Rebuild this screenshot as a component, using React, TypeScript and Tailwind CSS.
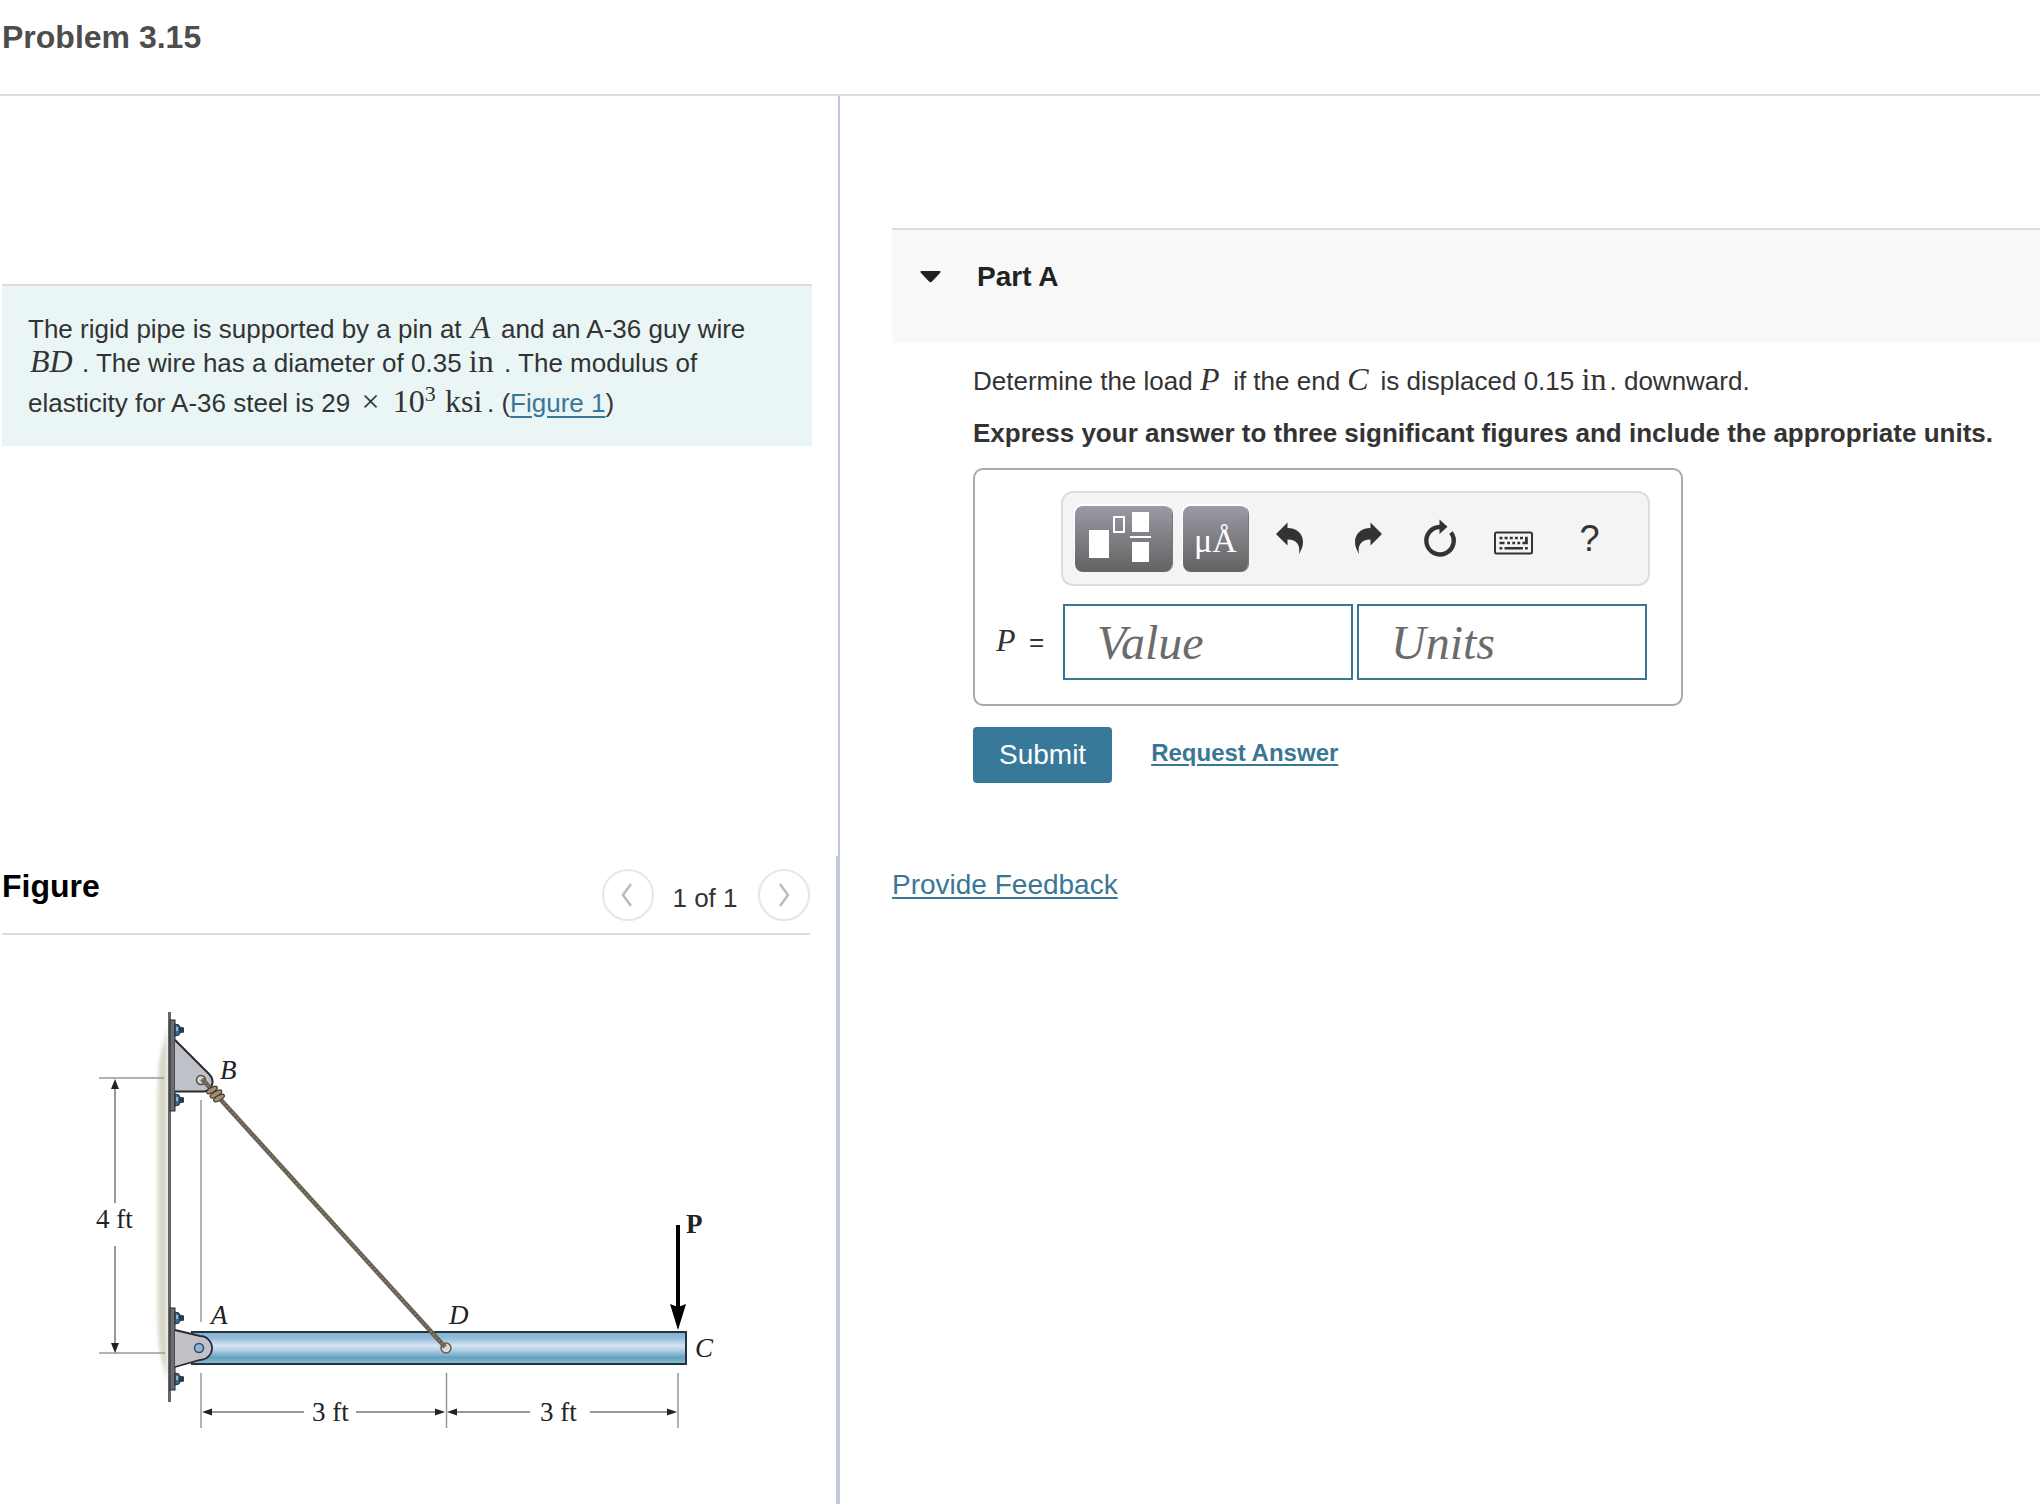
import type { ReactNode } from "react";

function MathText({ children, className = "" }: { children: ReactNode; className?: string }) {
  return (
    <span className={`inline-block font-['Liberation_Serif',serif] text-[32px] leading-7 ${className}`}>
      {children}
    </span>
  );
}

function ToolButton({ label, children }: { label: string; children: ReactNode }) {
  return (
    <button type="button" aria-label={label} className="flex h-[66px] w-[75px] items-center justify-center text-[#333]">
      {children}
    </button>
  );
}

const arrowPath = "M8 17 19.5 5.5V11C29 11 35 17 35 25 35 30 33 33 31 37 32.5 28 29 22.5 19.5 22.5V28.5Z";

function TemplatesIcon() {
  return (
    <svg width="97" height="66" viewBox="0 0 97 66" fill="#fff" aria-hidden="true">
      <rect x="14" y="24" width="20" height="28" />
      <rect x="39" y="11" width="10" height="15" fill="none" stroke="#fff" strokeWidth="2" />
      <rect x="57" y="6" width="17" height="20" />
      <rect x="55" y="30" width="21" height="2" />
      <rect x="57" y="36" width="17" height="20" />
    </svg>
  );
}

function UndoIcon() {
  return (
    <svg width="44" height="44" viewBox="0 0 44 44" fill="currentColor" aria-hidden="true">
      <path d={arrowPath} />
    </svg>
  );
}

function RedoIcon() {
  return (
    <svg width="44" height="44" viewBox="0 0 44 44" fill="currentColor" aria-hidden="true">
      <path d={arrowPath} transform="translate(47 0) scale(-1 1)" />
    </svg>
  );
}

function ResetIcon() {
  return (
    <svg width="44" height="44" viewBox="0 0 44 44" aria-hidden="true">
      <path d="M33 15.5A13.7 13.7 0 1 1 22 10" fill="none" stroke="currentColor" strokeWidth="4.4" />
      <path d="M21.5 2.5 29.5 9.7 21.5 17Z" fill="currentColor" />
    </svg>
  );
}

function KeyboardIcon() {
  return (
    <svg width="44" height="44" viewBox="0 0 44 44" fill="currentColor" aria-hidden="true">
      <rect x="2" y="15.5" width="37" height="21" rx="1.5" fill="none" stroke="currentColor" strokeWidth="2" />
      <path d="M6.5 19.7h3v2.6h-3zM11.6 19.7h3v2.6h-3zM16.8 19.7h3v2.6h-3zM21.9 19.7h3v2.6h-3zM27 19.7h3v2.6h-3zM32 19.7h2.8V27.2H29.4V24.7H32z" />
      <path d="M6.5 24.7h5v2.5h-5zM14.2 24.7h2.8v2.5h-2.8zM19.3 24.7h2.8v2.5h-2.8zM24.4 24.7h2.8v2.5h-2.8zM6.5 30h2.8v2.5H6.5zM11.5 30h18.4v2.5H11.5zM32 30h2.8v2.5H32z" />
    </svg>
  );
}

function Bolt({ y }: { y: number }) {
  return (
    <g transform={`translate(175 ${y})`}>
      <path d="M0-6 4-5 5 0 4 5 0 6Z" fill="#3f6b8a" stroke="#1f2c38" />
      <path d="M4-3.5 9-2.5V2.5L4 3.5Z" fill="#2a3c4b" />
      <path d="M1-3H3V1H1Z" fill="#8fb7cf" />
    </g>
  );
}

function PipeDiagram() {
  return (
    <svg
      role="img"
      aria-label="Pipe AC pinned at A and held by guy wire BD, with load P at C"
      className="block w-[660px] max-w-full"
      viewBox="80 1000 660 440"
      fontFamily="'Liberation Serif', serif"
      fontSize="27"
      fill="#222"
    >
      <defs>
        <linearGradient id="pipe" x1="0" y1="0" x2="0" y2="1">
          <stop offset="0" stopColor="#7fb0ce" />
          <stop offset="0.2" stopColor="#95bedb" />
          <stop offset="0.42" stopColor="#d6e4f2" />
          <stop offset="0.55" stopColor="#b9d3e6" />
          <stop offset="0.8" stopColor="#62a2bf" />
          <stop offset="1" stopColor="#8dbcd6" />
        </linearGradient>
        <linearGradient id="wall" x1="0" y1="0" x2="1" y2="0">
          <stop offset="0" stopColor="#d3d2c3" stopOpacity="0.2" />
          <stop offset="0.45" stopColor="#d3d2c3" />
          <stop offset="1" stopColor="#e3e2d8" />
        </linearGradient>
        <filter id="soft" x="-50%" y="-10%" width="200%" height="120%">
          <feGaussianBlur stdDeviation="1.5 6" />
        </filter>
      </defs>

      <path d="M168 1030C160 1050 156 1070 156 1110V1300C156 1340 160 1360 168 1378Z" fill="url(#wall)" filter="url(#soft)" />
      <rect x="168" y="1012" width="3" height="390" fill="#666" />

      <g stroke="#999" strokeWidth="1.5">
        <path d="M99 1078H164M99 1353H165" />
        <path d="M201 1100V1322M201 1373V1428M446.5 1373V1428M678 1373V1428" />
      </g>
      <g stroke="#777" strokeWidth="1.5">
        <path d="M115 1085V1203M115 1246V1346" />
        <path d="M206 1412H304M356 1412H442M450 1412H530M590 1412H674" />
      </g>
      <path d="M115 1079 119 1089H111ZM115 1353 119 1343H111ZM202 1412 212 1408.5V1415.5ZM445 1412 435 1408.5V1415.5ZM447 1412 457 1408.5V1415.5ZM677 1412 667 1408.5V1415.5Z" />

      <rect x="170" y="1020" width="5" height="91" fill="#6d6e73" stroke="#2b2b2e" />
      <path d="M175 1040 209 1074Q213 1078 212.5 1083 211 1091 204 1091.5H175Z" fill="#bfc1c9" />
      <path d="M175 1040 209 1074Q213 1078 212.5 1083 211 1091 204 1091.5H175" fill="none" stroke="#2a2b30" strokeWidth="2" />
      <Bolt y={1030} />
      <Bolt y={1100} />

      <rect x="192" y="1332" width="494" height="32" fill="url(#pipe)" stroke="#23343f" strokeWidth="2" />

      <rect x="170" y="1308" width="5" height="82" fill="#6d6e73" stroke="#2b2b2e" />
      <path d="M175 1330 200 1336A12 12 0 0 1 200 1360L175 1367Z" fill="#c1c1c7" />
      <path d="M175 1330 200 1336A12 12 0 0 1 200 1360L175 1367" fill="none" stroke="#2a2b30" strokeWidth="1.8" />
      <circle cx="199" cy="1348" r="4.5" fill="#88b9dc" stroke="#35495a" strokeWidth="1.5" />
      <Bolt y={1318} />
      <Bolt y={1379} />

      <circle cx="201" cy="1080" r="4.5" fill="#d8d5d3" stroke="#524944" strokeWidth="1.5" />
      <circle cx="446" cy="1348" r="5" fill="#d9dcdc" stroke="#66594c" strokeWidth="1.5" />
      <path d="M202 1079 445 1347" stroke="#655d50" strokeWidth="4.5" />
      <path d="M202 1079 445 1347" stroke="#877c69" strokeWidth="2" strokeDasharray="2 2" />
      <g fill="#a08f71" stroke="#443a2c" strokeWidth="1.2">
        <ellipse cx="212" cy="1090" rx="6" ry="2.5" transform="rotate(-30 212 1090)" />
        <ellipse cx="216" cy="1094" rx="6.5" ry="2.5" transform="rotate(-30 216 1094)" />
        <ellipse cx="219" cy="1098" rx="6" ry="2.5" transform="rotate(-30 219 1098)" />
      </g>

      <path d="M678 1225V1308" stroke="#000" strokeWidth="4" />
      <path d="M678 1330 670 1304 678 1307 686 1304Z" fill="#000" />

      <text x="96" y="1228">4 ft</text>
      <text x="312" y="1421">3 ft</text>
      <text x="540" y="1421">3 ft</text>
      <text x="686" y="1233" fontWeight="bold">P</text>
      <g fontStyle="italic">
        <text x="220" y="1079">B</text>
        <text x="211" y="1324">A</text>
        <text x="449" y="1324">D</text>
        <text x="695" y="1357">C</text>
      </g>
    </svg>
  );
}

function PagerButton({ label, path }: { label: string; path: string }) {
  return (
    <button
      type="button"
      aria-label={label}
      className="flex size-[52px] items-center justify-center rounded-full border-2 border-[#e6e6e6] text-[#bbb]"
    >
      <svg width="24" height="28" viewBox="0 0 24 28" fill="none" stroke="currentColor" strokeWidth="2.5" aria-hidden="true">
        <path d={path} />
      </svg>
    </button>
  );
}

export default function App() {
  return (
    <div className="flex min-h-screen flex-col bg-white font-['Liberation_Sans',Arial,sans-serif] text-[26px] text-[#333]">
      <header className="h-24 border-b-2 border-[#ddd] pt-[17px] pl-[2px]">
        <h1 className="text-[32px] leading-10 font-bold text-[#4d4d4d]">Problem 3.15</h1>
      </header>

      <div className="grid flex-1 grid-cols-[7fr_10fr]">
        <div className="flex flex-col">
          <section className="min-h-[760px] border-r-2 border-[#c0cadb] pt-[188px] pr-[26px] pl-[2px]">
            <p className="border-t-2 border-[#ddd] bg-[#eaf6f6] p-[26px] leading-[34px]">
              The rigid pipe is supported by a pin at <MathText className="w-[25px] pl-[2px] italic">A</MathText> and an
              A-36 guy wire <MathText className="w-[54px] pl-[2px] italic">BD</MathText>. The wire has a diameter of
              0.35 <MathText className="w-[28px]">in</MathText>&nbsp;. The modulus of elasticity for A-36 steel is 29{" "}
              <MathText className="w-[28px] pl-1">×</MathText>{" "}
              <MathText className="pt-[7px]">
                10<sup className="text-[22px]">3</sup>
              </MathText>{" "}
              <MathText className="w-[44px] pl-[2px]">ksi</MathText>. (
              <a href="#figure" className="text-[#3a7796] underline underline-offset-4">
                Figure 1
              </a>
              )
            </p>
          </section>

          <section id="figure" className="flex-1 border-r-4 border-[#c0cadb]">
            <div className="mr-[26px] ml-[2px] flex justify-between border-b-2 border-[#ddd] pt-[10px] pb-3">
              <h2 className="text-[32px] leading-10 font-bold text-black">Figure</h2>
              <nav aria-label="Figures" className="mt-[3px] flex items-center">
                <PagerButton label="Previous figure" path="M15 3 7 14 15 25" />
                <span className="w-[104px] pt-[6px] pr-[2px] text-center">1 of 1</span>
                <PagerButton label="Next figure" path="M8 3 16 14 8 25" />
              </nav>
            </div>
            <div className="pt-[65px] pl-20">
              <PipeDiagram />
            </div>
          </section>
        </div>

        <main className="pt-[132px] pl-[52px]">
          <h2 className="border-t-2 border-[#ddd] bg-[#f9f9f9]">
            <button
              type="button"
              aria-expanded="true"
              className="flex h-[113px] w-full items-center gap-9 pb-5 pl-7 text-left text-[28px] font-bold text-[#222]"
            >
              <svg width="21" height="12" viewBox="0 0 21 12" fill="currentColor" aria-hidden="true">
                <path d="M1.5 0H19.5Q21.5 0 20 2L12 10.500Q10.500 12 9 10.500L1 2Q-.5 0 1.500 0Z" />
              </svg>
              Part A
            </button>
          </h2>

          <form className="pl-[81px]" onSubmit={(e) => e.preventDefault()}>
            <p className="pt-[21px] leading-[34px]">
              Determine the load <MathText className="w-[26px] italic">P</MathText> if the end{" "}
              <MathText className="w-[26px] italic">C</MathText> is displaced 0.15{" "}
              <MathText className="w-[28px]">in</MathText>. downward.
            </p>
            <p className="pt-[18px] leading-[34px] font-bold">
              Express your answer to three significant figures and include the appropriate units.
            </p>

            <div className="mt-[18px] grid w-[710px] max-w-full grid-cols-[65px_1fr] gap-y-[18px] rounded-[10px] border-2 border-[#a9a9a9] pt-[21px] pr-[31px] pb-6 pl-[21px]">
              <div
                role="toolbar"
                aria-label="Answer tools"
                className="col-start-2 flex h-[95px] items-center rounded-xl border-2 border-[#ddd] bg-[#f4f4f4] pl-3"
              >
                <button
                  type="button"
                  aria-label="Templates"
                  className="mr-[11px] h-[66px] w-[97px] rounded-lg bg-linear-to-b from-[#9b99a5] to-[#636363] shadow-[-1px_-2px_0_#fff,1px_0_0_#777]"
                >
                  <TemplatesIcon />
                </button>
                <button
                  type="button"
                  aria-label="Symbols"
                  className="mr-1 h-[66px] w-[65px] rounded-lg bg-linear-to-b from-[#9b99a5] to-[#636363] pt-1 font-['Liberation_Serif',serif] text-[34px] text-white shadow-[-1px_-2px_0_#fff,1px_0_0_#777]"
                >
                  μÅ
                </button>
                <ToolButton label="Undo">
                  <UndoIcon />
                </ToolButton>
                <ToolButton label="Redo">
                  <RedoIcon />
                </ToolButton>
                <ToolButton label="Reset">
                  <ResetIcon />
                </ToolButton>
                <ToolButton label="Keyboard shortcuts">
                  <KeyboardIcon />
                </ToolButton>
                <ToolButton label="Help">
                  <span className="text-[36px]">?</span>
                </ToolButton>
              </div>

              <label htmlFor="value" className="flex items-center">
                <MathText className="w-[33px] pb-1 italic">P</MathText>=
              </label>
              <div className="grid grid-cols-2 gap-1 pr-[3px] pl-[2px]">
                <input
                  id="value"
                  placeholder="Value"
                  className="h-[76px] w-full min-w-0 border-2 border-[#3a7594] px-8 font-['Liberation_Serif',serif] text-[48px] italic placeholder:text-[#6b6b6b]"
                />
                <input
                  aria-label="Units"
                  placeholder="Units"
                  className="h-[76px] w-full min-w-0 border-2 border-[#3a7594] px-8 font-['Liberation_Serif',serif] text-[48px] italic placeholder:text-[#6b6b6b]"
                />
              </div>
            </div>

            <div className="mt-[21px] flex items-center gap-[39px]">
              <button type="submit" className="h-14 rounded bg-[#387899] px-[26px] text-[28px] text-white">
                Submit
              </button>
              <a href="#answer" className="pb-1 text-2xl font-bold text-[#3a7796] underline underline-offset-3">
                Request Answer
              </a>
            </div>
          </form>

          <a href="#feedback" className="mt-[86px] inline-block text-[28px] leading-8 text-[#3a7796] underline underline-offset-3">
            Provide Feedback
          </a>
        </main>
      </div>
    </div>
  );
}
